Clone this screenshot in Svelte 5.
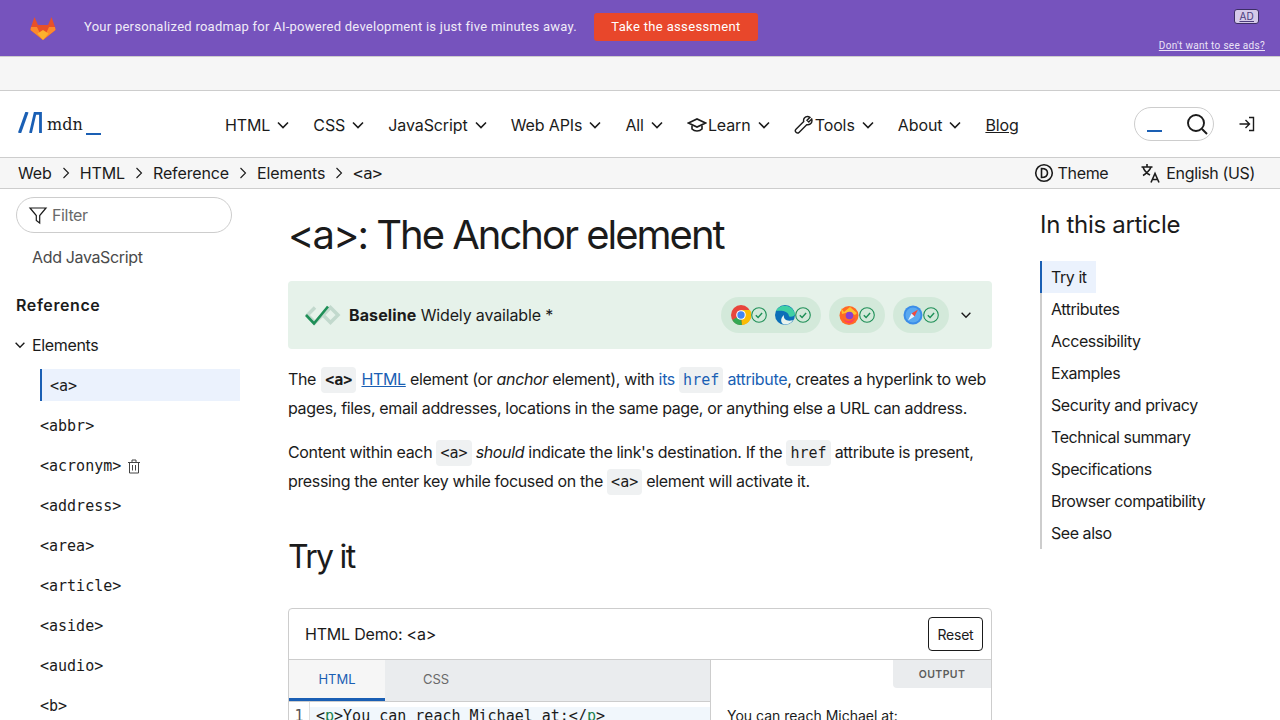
<script>
	const nav = [
		{label: 'HTML'},
		{label: 'CSS'},
		{label: 'JavaScript'},
		{label: 'Web APIs'},
		{label: 'All'},
		{label: 'Learn', icon: 'learn'},
		{label: 'Tools', icon: 'tools'},
		{label: 'About'}
	];
	const crumbs = ['Web', 'HTML', 'Reference', 'Elements'];
	const elements = ['<abbr>', '<acronym>', '<address>', '<area>', '<article>', '<aside>', '<audio>', '<b>'];
	const toc = ['Attributes', 'Accessibility', 'Examples', 'Security and privacy', 'Technical summary', 'Specifications', 'Browser compatibility', 'See also'];
</script>

{#snippet chevron(size = 16)}
	<svg class="chevron" width={size} height={size} viewBox="0 0 16 16"><path d="M3 5.500l5 5 5-5" fill="none" stroke="currentColor" stroke-width="1.600" /></svg>
{/snippet}

{#snippet tick()}
	<svg width="16" height="16" viewBox="0 0 16 16">
		<circle cx="8" cy="8" r="7.300" fill="none" stroke="#1e8f57" stroke-width="1.100" />
		<path d="M4.800 8.200l2.300 2.300 4-4.500" fill="none" stroke="#1e8f57" stroke-width="1.400" />
	</svg>
{/snippet}

<div class="page">
	<div class="banner">
		<svg class="fox" width="26" height="25" viewBox="0 0 26 25">
			<path d="M13 24L.5 14 1 11 4.500 1 8 9h10l3.500-8L25 11l.5 3z" fill="#e8502a" />
			<path d="M.5 14L1 11l6 0 6 13z" fill="#fc8a2c" />
			<path d="M25.500 14L25 11l-6 0-6 13z" fill="#fc8a2c" />
			<path d="M13 24L7.500 17.500 13 14l5.500 3.500z" fill="#fcb12e" />
		</svg>
		<p class="banner-text">Your personalized roadmap for AI-powered development is just five minutes away.</p>
		<button class="cta">Take the assessment</button>
		<div class="ad-side">
			<span class="ad-tag">AD</span>
			<a class="no-ads" href="#top">Don't want to see ads?</a>
		</div>
	</div>

	<div class="strip"></div>

	<header class="top">
		<div class="logo">
			<svg width="24" height="21" viewBox="0 0 24 21" fill="none" stroke="#1a5fb4">
				<path d="M1.500 21L9 0" stroke-width="3.200" />
				<path d="M12.500 21L17 1.400H22.500V21" stroke-width="2.800" />
			</svg>
			<span class="logo-word">mdn</span>
			<span class="logo-bar"></span>
		</div>
		<nav class="menu">
			{#each nav as item}
				<span class="menu-item">
					{#if item.icon === 'learn'}
						<svg width="20" height="20" viewBox="0 0 20 20" fill="none" stroke="#1b1b1b" stroke-width="1.600"><path d="M1.500 8L10 4l8.500 4-8.500 4z" /><path d="M5 10.500v3.500c1.500 1.500 3.200 2 5 2s3.500-.5 5-2v-3.500" /></svg>
					{:else if item.icon === 'tools'}
						<svg width="20" height="20" viewBox="0 0 20 20" fill="none" stroke="#1b1b1b" stroke-width="1.400"><path d="M13.500 1.500c-2.500 0-4.500 2.300-3.800 5L2 14.200c-1 1-1 2 0 3s2 1.200 3 .2l7.700-7.700c2.700.6 5.300-1.400 5.300-4 0-.6-.1-1.100-.3-1.600L14.800 7 13 5.300l3-3c-.8-.5-1.600-.8-2.500-.8z" /></svg>
					{/if}
					<span>{item.label}</span>
					{@render chevron()}
				</span>
			{/each}
			<a class="blog" href="#top">Blog</a>
		</nav>
		<div class="search">
			<span class="caret"></span>
			<svg width="24" height="24" viewBox="0 0 24 24" fill="none" stroke="#1b1b1b" stroke-width="1.900"><circle cx="11" cy="11" r="8" /><path d="M17 17l5 5" /></svg>
		</div>
		<svg class="login" width="18" height="18" viewBox="0 0 18 18" fill="none" stroke="#1b1b1b" stroke-width="1.400"><path d="M1.500 9h9.500M7.500 5l4 4-4 4" /><path d="M11 2.500h4.500v13H11" /></svg>
	</header>

	<div class="crumbs">
		{#each crumbs as crumb}
			<span>{crumb}</span>
			<svg width="16" height="16" viewBox="0 0 16 16"><path d="M5.500 3l5 5-5 5" fill="none" stroke="#1b1b1b" stroke-width="1.100" /></svg>
		{/each}
		<span class="here">&lt;a&gt;</span>
		<div class="crumb-right">
			<span class="crumb-tool">
				<svg width="20" height="20" viewBox="0 0 20 20" fill="none" stroke="#1b1b1b" stroke-width="1.600"><circle cx="10" cy="10" r="8.300" /><path d="M7.500 5.500c5 0 6 2 6 4.500s-1 4.500-6 4.500z" /></svg>
				Theme
			</span>
			<span class="crumb-tool">
				<svg width="22" height="22" viewBox="0 0 22 22" fill="none" stroke="#1b1b1b" stroke-width="1.600"><path d="M1.500 5h11M7 2v3M3 5c1 3 4 6.500 7 8M11 5c-1 3-5 7-8 8.500" /><path d="M11 20.500l4-9 4 9M12.300 17.500h5.400" /></svg>
				English (US)
			</span>
		</div>
	</div>

	<div class="body">
		<aside class="side">
			<div class="filter">
				<svg width="20" height="20" viewBox="0 0 20 20" fill="none" stroke="#1b1b1b" stroke-width="1.200"><path d="M2 3h16l-6.300 7.500V18l-3.400-2.500v-5z" /></svg>
				<span>Filter</span>
			</div>
			<div class="side-link">Add JavaScript</div>
			<div class="side-head">Reference</div>
			<div class="side-group">{@render chevron(14)}<span>Elements</span></div>
			<div class="el current">&lt;a&gt;</div>
			{#each elements as el}
				<div class="el">
					{el}
					{#if el === '<acronym>'}
						<svg width="14" height="15" viewBox="0 0 14 15" fill="none" stroke="#444" stroke-width="1"><path d="M1 3.500h12M5 3.500V1h4v2.500M2.500 3.500V14h9V3.500M5.500 6v5.500M8.500 6v5.500" /></svg>
					{/if}
				</div>
			{/each}
		</aside>

		<main class="article">
			<h1>&lt;a&gt;: The Anchor element</h1>

			<div class="baseline">
				<svg class="bl-mark" width="38" height="22" viewBox="0 0 38 22" fill="none">
					<path d="M11 3.500L3.500 11l7.500 7.500 7.500-7.500M19 11l7.500-7.500 7.500 7.500-7.500 7.500-7.500-7.500" stroke="#c2d9cd" stroke-width="3.500" />
					<path d="M2 11l8 8.500L24 2.500" stroke="#1e8f57" stroke-width="2.600" />
				</svg>
				<span class="bl-text"><b>Baseline</b> Widely available *</span>
				<div class="browsers">
					<span class="pill">
						<svg width="20" height="20" viewBox="0 0 20 20">
							<circle cx="10" cy="10" r="10" fill="#e8453c" />
							<path d="M10 10L1.300 15a10 10 0 0 0 9.700 5z" fill="#34a853" />
							<path d="M10 5h9a10 10 0 0 1-8 15z" fill="#fbbc05" />
							<circle cx="10" cy="10" r="4.800" fill="#fff" />
							<circle cx="10" cy="10" r="3.700" fill="#4285f4" />
						</svg>
						{@render tick()}
						<svg class="second" width="20" height="20" viewBox="0 0 20 20">
							<circle cx="10" cy="10" r="10" fill="#0c6fb8" />
							<path d="M1 6c3-7 16-8 19 3 0 2-3 3-6 2.500C14 7 8 5 1 6z" fill="#3fd0a4" />
							<path d="M9 10c-1 4 3 7 9 5-3 5-8 5-10 4-3-2-2-7 1-9z" fill="#e8f3ee" />
						</svg>
						{@render tick()}
					</span>
					<span class="pill">
						<svg width="20" height="20" viewBox="0 0 20 20">
							<circle cx="10" cy="10.500" r="9.500" fill="#ff6a25" />
							<path d="M2 3l3 4 6-5 7 6-2 2-6-3-7 2z" fill="#ffc12e" />
							<circle cx="10.500" cy="10.500" r="3.800" fill="#8a3fcf" />
							<path d="M4 13c2 4 9 4 12-1-1 8-10 8-12 1z" fill="#ff3d5e" />
						</svg>
						{@render tick()}
					</span>
					<span class="pill">
						<svg width="20" height="20" viewBox="0 0 20 20">
							<circle cx="10" cy="10" r="9.500" fill="#3b8de8" />
							<circle cx="10" cy="10" r="7.500" fill="#5aa9f0" />
							<path d="M15 4.500L8.500 8.500 11.500 11.500z" fill="#f04a3e" />
							<path d="M5 15.500l3.500-7 3 3z" fill="#e8f3ff" />
						</svg>
						{@render tick()}
					</span>
					<span class="bl-more">{@render chevron(14)}</span>
				</div>
			</div>

			<p>The <code class="strong">&lt;a&gt;</code> <a class="under" href="#top">HTML</a> element (or <em>anchor</em> element), with <a href="#top">its <code>href</code> attribute</a>, creates a hyperlink to web pages, files, email addresses, locations in the same page, or anything else a URL can address.</p>
			<p>Content within each <code>&lt;a&gt;</code> <em>should</em> indicate the link's destination. If the <code>href</code> attribute is present, pressing the enter key while focused on the <code>&lt;a&gt;</code> element will activate it.</p>

			<h2>Try it</h2>

			<section class="demo">
				<div class="demo-head">
					<span>HTML Demo: &lt;a&gt;</span>
					<button class="reset">Reset</button>
				</div>
				<div class="demo-body">
					<div class="editor">
						<div class="tabs">
							<span class="tab active">HTML</span>
							<span class="tab">CSS</span>
						</div>
						<div class="code-line">
							<span class="gutter">1</span>
							<span class="code">&lt;<span class="tag">p</span>&gt;You can reach Michael at:&lt;/<span class="tag">p</span>&gt;</span>
						</div>
					</div>
					<div class="output">
						<span class="output-tag">OUTPUT</span>
						<p class="output-text">You can reach Michael at:</p>
					</div>
				</div>
			</section>
		</main>

		<aside class="toc">
			<h2>In this article</h2>
			<ul>
				<li class="on"><span>Try it</span></li>
				{#each toc as entry}
					<li><span>{entry}</span></li>
				{/each}
			</ul>
		</aside>
	</div>
</div>

<style>
	:global(body) {
		background: #fff;
	}

	.page {
		height: 720px;
		overflow: hidden;
		font-family: Inter, "Liberation Sans", sans-serif;
		font-size: 16px;
		letter-spacing: -0.35px;
		color: #1b1b1b;
	}

	.banner {
		height: 56px;
		box-sizing: border-box;
		background: #7653bd;
		display: flex;
		align-items: center;
		padding: 0 15px 2px 30px;
		color: #f0ebf8;
	}
	.fox {
		margin: 2px 28px 0 0;
	}
	.banner-text {
		margin: 0 0 2px;
		font-family: Roboto, sans-serif;
		font-size: 13px;
		letter-spacing: 0.26px;
	}
	.cta {
		margin-left: 17px;
		height: 28px;
		width: 164px;
		border: 0;
		border-radius: 3px;
		padding: 0 0 2px;
		background: #e8472b;
		color: #fff;
		font-family: Roboto, sans-serif;
		font-size: 13px;
		letter-spacing: 0.35px;
	}
	.ad-side {
		margin: 0 0 -2px auto;
		height: 56px;
		display: flex;
		flex-direction: column;
		align-items: flex-end;
		justify-content: space-between;
		padding: 9px 0 5px;
		box-sizing: border-box;
	}
	.ad-tag {
		font-size: 10px;
		line-height: 13px;
		padding: 0 4px;
		margin-right: 6px;
		border: 1px solid #3c2e66;
		border-radius: 3px;
		background: #d5cae9;
		color: #4b3c7c;
		text-decoration: underline;
		letter-spacing: 0.2px;
	}
	.no-ads {
		font-family: Roboto, sans-serif;
		font-size: 10px;
		letter-spacing: 0.3px;
		color: #ebe3f7;
	}

	.strip {
		height: 33px;
		background: #f6f6f6;
		border-top: 1px solid #cdcdcd;
		border-bottom: 1px solid #cdcdcd;
	}

	.top {
		height: 66px;
		display: flex;
		align-items: center;
		padding: 0 24px 0 18px;
	}
	.logo {
		width: 207px;
		flex: none;
		display: flex;
		align-items: flex-end;
		height: 21px;
		margin-top: -3px;
	}
	.logo-word {
		font-family: "DejaVu Serif", serif;
		font-size: 16px;
		letter-spacing: 0;
		line-height: 16px;
		margin-left: 5px;
	}
	.logo-bar {
		width: 15px;
		height: 2px;
		background: #1a5fb4;
		margin-left: 3px;
		margin-bottom: -2px;
	}
	.menu {
		display: flex;
		align-items: center;
		gap: 22px;
		margin-top: 2px;
		font-size: 16px;
		letter-spacing: -0.1px;
	}
	.menu-item {
		display: flex;
		align-items: center;
		gap: 5px;
	}
	.menu-item svg:not(.chevron) {
		margin-right: -4px;
	}
	.blog {
		color: #1b1b1b;
	}
	.search {
		margin-left: auto;
		width: 80px;
		height: 34px;
		box-sizing: border-box;
		border: 1px solid #cdcdcd;
		border-radius: 17px;
		display: flex;
		align-items: center;
		justify-content: space-between;
		padding: 0 4px 0 12px;
	}
	.caret {
		width: 15px;
		height: 2px;
		background: #1a5fb4;
		margin-top: 14px;
	}
	.login {
		margin-left: 24px;
	}

	.crumbs {
		height: 30px;
		background: #f6f6f6;
		border-top: 1px solid #cdcdcd;
		border-bottom: 1px solid #cdcdcd;
		display: flex;
		align-items: center;
		gap: 6px;
		padding: 0 25px 0 18px;
		font-size: 16px;
		letter-spacing: -0.12px;
	}
	.here {
		font-family: "DejaVu Sans Mono", monospace;
		font-size: 16px;
		letter-spacing: 0;
	}
	.crumb-right {
		margin-left: auto;
		display: flex;
		gap: 32px;
		letter-spacing: -0.35px;
	}
	.crumb-tool {
		display: flex;
		align-items: center;
		gap: 4px;
	}

	.body {
		display: grid;
		grid-template-columns: 240px 704px 240px;
		column-gap: 48px;
	}

	.side {
		padding: 8px 0 0 16px;
	}
	.filter {
		height: 36px;
		margin-right: 8px;
		box-sizing: border-box;
		border: 1px solid #cdcdcd;
		border-radius: 18px;
		display: flex;
		align-items: center;
		gap: 4px;
		padding-left: 11px;
		color: #696969;
	}
	.side-link {
		margin: 14px 0 0 16px;
		line-height: 20px;
		color: #4a4a4a;
	}
	.side-head {
		margin-top: 28px;
		font-weight: 600;
		letter-spacing: 0.6px;
		line-height: 20px;
	}
	.side-group {
		margin: 20px 0 0 -3px;
		display: flex;
		align-items: center;
		gap: 5px;
		line-height: 20px;
	}
	.el {
		height: 32px;
		box-sizing: border-box;
		padding-top: 2px;
		margin: 8px 0 0 24px;
		display: flex;
		align-items: center;
		gap: 6px;
		font-family: "DejaVu Sans Mono", monospace;
		font-size: 15px;
		letter-spacing: 0;
	}
	.el.current {
		margin-top: 14px;
		background: #ebf2fd;
		border-left: 2px solid #1a5fb4;
		padding-left: 8px;
	}

	.article {
		min-width: 0;
		font-size: 16px;
		line-height: 29px;
	}
	h1 {
		margin: 26px 0 0;
		font-size: 40px;
		font-weight: 400;
		line-height: 40px;
		letter-spacing: -2px;
	}
	.baseline {
		margin-top: 26px;
		height: 68px;
		background: #e6f2ea;
		border-radius: 4px;
		display: flex;
		align-items: center;
		padding: 0 19px 0 16px;
		gap: 7px;
	}
	.bl-text {
		letter-spacing: -0.15px;
	}
	.bl-text b {
		font-weight: 700;
		letter-spacing: 0.1px;
	}
	.browsers {
		margin-left: auto;
		display: flex;
		align-items: center;
		gap: 8px;
	}
	.pill {
		height: 36px;
		padding: 0 10px;
		border-radius: 18px;
		background: #d3e9da;
		display: flex;
		align-items: center;
	}
	.second {
		margin-left: 8px;
	}
	.bl-more {
		display: flex;
		margin-left: 2px;
	}
	.article p {
		margin: 15px 0 0;
	}
	.baseline + p {
		margin-top: 16px;
	}
	code {
		font-family: "DejaVu Sans Mono", monospace;
		font-size: 15px;
		line-height: 1;
		letter-spacing: 0;
		background: #eff1f2;
		border-radius: 4px;
		padding: 4px 4px;
	}
	code.strong {
		font-weight: 700;
		margin: 0 1px;
	}
	.article a {
		color: #1a5fb4;
		text-decoration: none;
	}
	.article a.under {
		text-decoration: underline;
	}
	.article h2 {
		margin: 41px 0 0;
		font-size: 32px;
		font-weight: 400;
		line-height: 40px;
		letter-spacing: -1.7px;
	}

	.demo {
		margin-top: 31px;
		border: 1px solid #cdcdcd;
		border-radius: 4px;
	}
	.demo-head {
		height: 50px;
		display: flex;
		align-items: center;
		justify-content: space-between;
		padding: 0 8px 0 16px;
		border-bottom: 1px solid #cdcdcd;
		letter-spacing: -0.2px;
	}
	.reset {
		height: 34px;
		width: 55px;
		background: #fff;
		border: 1px solid #1b1b1b;
		border-radius: 4px;
		font-family: Inter, sans-serif;
		font-size: 14px;
		letter-spacing: -0.25px;
		color: #1b1b1b;
		padding: 0;
	}
	.demo-body {
		display: grid;
		grid-template-columns: 422px 1fr;
	}
	.editor {
		border-right: 1px solid #cdcdcd;
		background: #fff;
	}
	.tabs {
		display: flex;
		height: 41px;
		background: #eaecee;
		border-bottom: 1px solid #cdcdcd;
	}
	.tab {
		width: 96px;
		padding-bottom: 3px;
		display: flex;
		align-items: center;
		justify-content: center;
		font-size: 13px;
		letter-spacing: 0;
		color: #696969;
	}
	.tab + .tab {
		margin-left: 3px;
	}
	.tab.active {
		background: #f6f6f6;
		color: #1a5fb4;
		box-shadow: inset 0 -3px 0 #1a5fb4;
	}
	.code-line {
		display: flex;
		height: 28px;
		align-items: center;
		font-family: "DejaVu Sans Mono", monospace;
		font-size: 15px;
		letter-spacing: 0;
		background: linear-gradient(#fff 5px, #f1f7fc 5px);
	}
	.gutter {
		width: 20px;
		height: 28px;
		line-height: 28px;
		text-align: center;
		color: #555;
		background: #fff;
		border-right: 1px solid #dedede;
		margin-right: 6px;
	}
	.tag {
		color: #1a7f4e;
	}
	.output {
		padding: 0 16px;
	}
	.output-tag {
		display: block;
		width: 98px;
		height: 28px;
		margin-left: auto;
		margin-right: -16px;
		background: #eaecee;
		border-radius: 0 0 0 4px;
		font-size: 10.500px;
		font-weight: 600;
		letter-spacing: 0.4px;
		line-height: 29px;
		text-align: center;
		color: #5c5c5c;
	}
	.article .output-text {
		margin: 18px 0 0;
		font-size: 14px;
		letter-spacing: 0;
		line-height: 20px;
	}

	.toc h2 {
		margin: 22px 0 0;
		font-size: 24px;
		font-weight: 400;
		line-height: 28px;
		letter-spacing: -0.3px;
	}
	.toc ul {
		list-style: none;
		margin: 22px 0 0;
		padding: 0;
		border-left: 2px solid #cdcdcd;
		width: 200px;
		letter-spacing: -0.45px;
	}
	.toc li {
		height: 32px;
		display: flex;
		align-items: center;
	}
	.toc li span {
		padding: 0 9px;
		line-height: 32px;
	}
	.toc li.on {
		margin-left: -2px;
		border-left: 2px solid #1a5fb4;
	}
	.toc li.on span {
		background: #ebf2fd;
	}
</style>
